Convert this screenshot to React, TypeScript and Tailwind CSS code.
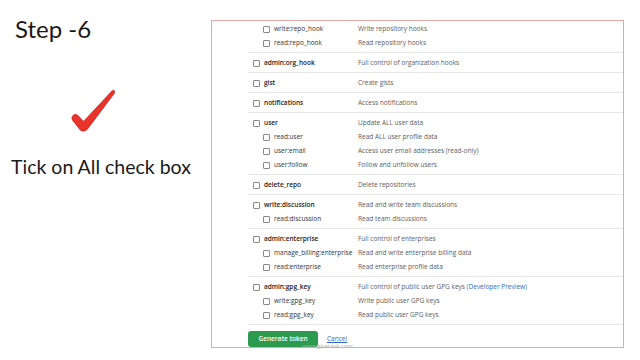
type Scope = { name: string; desc: string; sub?: boolean; preview?: boolean };

// grupos de permisos, tal como aparecen en la lista
const groups: Scope[][] = [
    [
        { name: "write:repo_hook", desc: "Write repository hooks", sub: true },
        { name: "read:repo_hook", desc: "Read repository hooks", sub: true },
    ],
    [{ name: "admin:org_hook", desc: "Full control of organization hooks" }],
    [{ name: "gist", desc: "Create gists" }],
    [{ name: "notifications", desc: "Access notifications" }],
    [
        { name: "user", desc: "Update ALL user data" },
        { name: "read:user", desc: "Read ALL user profile data", sub: true },
        { name: "user:email", desc: "Access user email addresses (read-only)", sub: true },
        { name: "user:follow", desc: "Follow and unfollow users", sub: true },
    ],
    [{ name: "delete_repo", desc: "Delete repositories" }],
    [
        { name: "write:discussion", desc: "Read and write team discussions" },
        { name: "read:discussion", desc: "Read team discussions", sub: true },
    ],
    [
        { name: "admin:enterprise", desc: "Full control of enterprises" },
        { name: "manage_billing:enterprise", desc: "Read and write enterprise billing data", sub: true },
        { name: "read:enterprise", desc: "Read enterprise profile data", sub: true },
    ],
    [
        { name: "admin:gpg_key", desc: "Full control of public user GPG keys", preview: true },
        { name: "write:gpg_key", desc: "Write public user GPG keys", sub: true },
        { name: "read:gpg_key", desc: "Read public user GPG keys", sub: true },
    ],
];

function Checkbox() {
    return <span className="w-[7px] h-[7px] border border-[#8a8a8a] rounded-[1px] bg-white shrink-0" />;
}

function RedTick() {
    return (
        <svg width="44" height="44" viewBox="0 0 44 44">
            <path
                d="M41 2 C42.5 0.5 45 2 43.5 4 L16.5 40 C14.5 42.8 10 42.8 8.5 40 L1.5 31 C-0.5 27.5 3.5 23.5 7 26.5 L12.5 32.5 Z"
                fill="#e8342a"
                stroke="#c9201a"
                strokeWidth="0.8"
            />
        </svg>
    );
}

export default function App() {
    return (
        <div className="w-[640px] h-[360px] bg-white flex overflow-hidden font-['Lato',sans-serif]">
            {/* columna izquierda con el paso */}
            <div className="w-[211px] shrink-0 flex flex-col">
                <h1 className="text-[24px] leading-none text-[#1a1a1a] ml-[15px] mt-[17px]">Step -6</h1>
                <div className="ml-[71px] mt-[48px]">
                    <RedTick />
                </div>
                <p className="text-[19.5px] leading-none text-[#1a1a1a] ml-[11px] mt-[24px]">Tick on All check box</p>
            </div>

            {/* captura de la página de tokens */}
            <div className="mt-[20px] w-[413px] h-[328px] border border-[#e2a8a4] pl-[36px] flex flex-col font-['Open_Sans',sans-serif] text-[6.5px]">
                {groups.map((group, gi) => (
                    <div
                        key={gi}
                        className={`border-b border-[#e6e6e6] pb-[2px] ${gi === 0 ? "pt-[1px]" : "pt-[3px]"}`}
                    >
                        {group.map((s) => (
                            <div key={s.name} className="h-[14px] flex items-center">
                                <div className={`w-[110px] shrink-0 flex items-center gap-[4px] ${s.sub ? "pl-[15px]" : "pl-[5px]"}`}>
                                    <Checkbox />
                                    <span className={s.sub ? "text-[#333]" : "font-semibold text-[#222]"}>{s.name}</span>
                                </div>
                                <span className="text-[#5c5c5c]">
                                    {s.desc}
                                    {s.preview && <span className="text-[#2f6bc4]"> (Developer Preview)</span>}
                                </span>
                            </div>
                        ))}
                    </div>
                ))}
                <div className="mt-[6px] flex items-center gap-[9px] relative">
                    <button className="w-[70px] h-[16px] rounded-[3px] bg-[#2c9a4f] text-white text-[6.5px] font-semibold">
                        Generate token
                    </button>
                    <span className="text-[#2f6bc4] underline">Cancel</span>
                    <span className="absolute left-[54px] top-[12px] leading-none text-[#b0b0b0] text-[6px]">www.gitetask.com</span>
                </div>
            </div>
        </div>
    );
}
